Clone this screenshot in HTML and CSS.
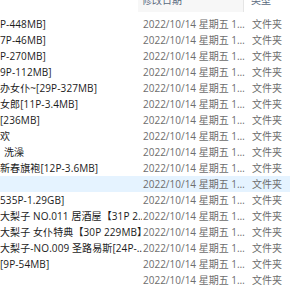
FILE: index.html
```html
<!DOCTYPE html>
<html>
<head>
<meta charset="utf-8">
<link rel="stylesheet" href="styles.css">
</head>
<body>
<div class="list">
  <div class="head">
    <div class="hcell hname"></div>
    <div class="hcell hdate">修改日期</div>
    <div class="hcell htype">类型</div>
  </div>
  <div class="row"><div class="name">P-448MB]</div><div class="date">2022/10/14 星期五 1…</div><div class="type">文件夹</div></div>
  <div class="row"><div class="name">7P-46MB]</div><div class="date">2022/10/14 星期五 1…</div><div class="type">文件夹</div></div>
  <div class="row"><div class="name">P-270MB]</div><div class="date">2022/10/14 星期五 1…</div><div class="type">文件夹</div></div>
  <div class="row"><div class="name">9P-112MB]</div><div class="date">2022/10/14 星期五 1…</div><div class="type">文件夹</div></div>
  <div class="row"><div class="name">办女仆~[29P-327MB]</div><div class="date">2022/10/14 星期五 1…</div><div class="type">文件夹</div></div>
  <div class="row"><div class="name">女郎[11P-3.4MB]</div><div class="date">2022/10/14 星期五 1…</div><div class="type">文件夹</div></div>
  <div class="row"><div class="name">[236MB]</div><div class="date">2022/10/14 星期五 1…</div><div class="type">文件夹</div></div>
  <div class="row"><div class="name">欢</div><div class="date">2022/10/14 星期五 1…</div><div class="type">文件夹</div></div>
  <div class="row"><div class="name indent">洗澡</div><div class="date">2022/10/14 星期五 1…</div><div class="type">文件夹</div></div>
  <div class="row"><div class="name">新春旗袍[12P-3.6MB]</div><div class="date">2022/10/14 星期五 1…</div><div class="type">文件夹</div></div>
  <div class="row hover"><div class="name"></div><div class="date">2022/10/14 星期五 1…</div><div class="type">文件夹</div></div>
  <div class="row"><div class="name">535P-1.29GB]</div><div class="date">2022/10/14 星期五 1…</div><div class="type">文件夹</div></div>
  <div class="row"><div class="name">大梨子 NO.011 居酒屋【31P 2…</div><div class="date">2022/10/14 星期五 1…</div><div class="type">文件夹</div></div>
  <div class="row"><div class="name">大梨子 女仆特典【30P 229MB】</div><div class="date">2022/10/14 星期五 1…</div><div class="type">文件夹</div></div>
  <div class="row"><div class="name">大梨子-NO.009 圣路易斯[24P-…</div><div class="date">2022/10/14 星期五 1…</div><div class="type">文件夹</div></div>
  <div class="row"><div class="name">[9P-54MB]</div><div class="date">2022/10/14 星期五 1…</div><div class="type">文件夹</div></div>
  <div class="row"><div class="name"></div><div class="date">2022/10/14 星期五 1…</div><div class="type">文件夹</div></div>
</div>
</body>
</html>
```
FILE: styles.css
```css
html, body {
  margin: 0;
  padding: 0;
  background: #ffffff;
}
body {
  font-family: "Open Sans", "Noto Sans CJK SC", sans-serif;
  font-size: 10px;
  color: #1b1b1b;
  width: 300px;
  height: 300px;
  overflow: hidden;
}
.list {
  display: flex;
  flex-direction: column;
}
.head {
  display: grid;
  grid-template-columns: 138px 106px 56px;
  height: 24px;
  margin-top: -8px;
}
.hcell {
  min-width: 0;
  line-height: 16px;
  color: #5a6a7e;
  white-space: nowrap;
  overflow: hidden;
  height: 20px;
}
.hdate {
  background: #f7f7f7;
  padding-left: 4px;
  border-right: 1px solid #e5e5e5;
}
.htype {
  padding-left: 7px;
}
.row {
  display: grid;
  grid-template-columns: 142px 110px 48px;
  height: 16px;
  line-height: 16px;
  width: 290px;
}
.row.hover {
  background: #e5f3ff;
}
.name, .date, .type {
  min-width: 0;
  white-space: nowrap;
  overflow: hidden;
}
.name {
  padding-right: 6px;
  color: #1b1b1b;
  letter-spacing: 0.1px;
}
.name.indent {
  padding-left: 4px;
}
.date {
  padding-left: 1px;
  color: #6d6d6d;
}
.type {
  color: #6d6d6d;
}
```
